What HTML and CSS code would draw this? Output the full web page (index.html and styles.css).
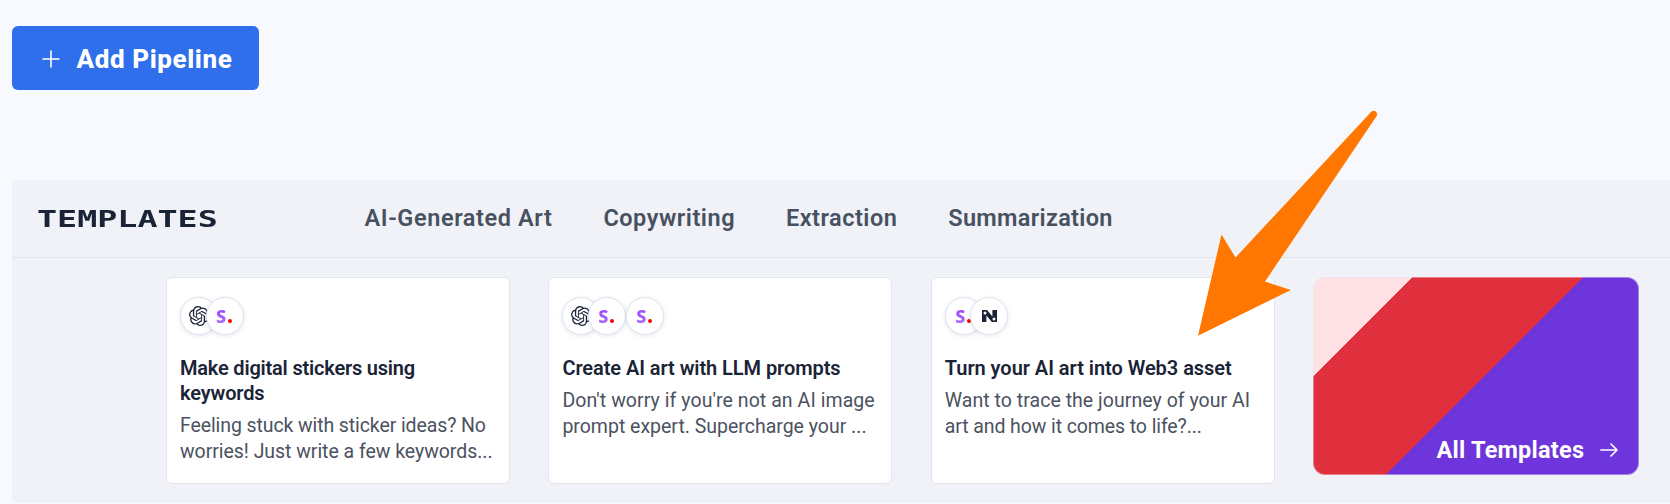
FILE: index.html
```
<!DOCTYPE html>
<html lang="en">
<head>
<meta charset="utf-8">
<title>Pipelines</title>
<link rel="stylesheet" href="styles.css">
</head>
<body>
<svg class="defs" width="0" height="0" aria-hidden="true">
  <symbol id="openai" viewBox="0 0 24 24"><path d="M22.2819 9.8211a5.9847 5.9847 0 0 0-.5157-4.9108 6.0462 6.0462 0 0 0-6.5098-2.9A6.0651 6.0651 0 0 0 4.9807 4.1818a5.9847 5.9847 0 0 0-3.9977 2.9 6.0462 6.0462 0 0 0 .7427 7.0966 5.98 5.98 0 0 0 .511 4.9107 6.051 6.051 0 0 0 6.5146 2.9001A5.9847 5.9847 0 0 0 13.2599 24a6.0557 6.0557 0 0 0 5.7718-4.2058 5.9894 5.9894 0 0 0 3.9977-2.9001 6.0557 6.0557 0 0 0-.7475-7.0729zm-9.022 12.6081a4.4755 4.4755 0 0 1-2.8764-1.0408l.1419-.0804 4.7783-2.7582a.7948.7948 0 0 0 .3927-.6813v-6.7369l2.02 1.1686a.071.071 0 0 1 .038.052v5.5826a4.504 4.504 0 0 1-4.4945 4.4944zm-9.6607-4.1254a4.4708 4.4708 0 0 1-.5346-3.0137l.142.0852 4.783 2.7582a.7712.7712 0 0 0 .7806 0l5.8428-3.3685v2.3324a.0804.0804 0 0 1-.0332.0615L9.74 19.9502a4.4992 4.4992 0 0 1-6.1408-1.6464zM2.3408 7.8956a4.485 4.485 0 0 1 2.3655-1.9728V11.6a.7664.7664 0 0 0 .3879.6765l5.8144 3.3543-2.0201 1.1685a.0757.0757 0 0 1-.071 0l-4.8303-2.7865A4.504 4.504 0 0 1 2.3408 7.872zm16.5963 3.8558L13.1038 8.364 15.1192 7.2a.0757.0757 0 0 1 .071 0l4.8303 2.7913a4.4944 4.4944 0 0 1-.6765 8.1042v-5.6772a.79.79 0 0 0-.407-.667zm2.0107-3.0231l-.142-.0852-4.7735-2.7818a.7759.7759 0 0 0-.7854 0L9.409 9.2297V6.8974a.0662.0662 0 0 1 .0284-.0615l4.8303-2.7866a4.4992 4.4992 0 0 1 6.6802 4.66zM8.3065 12.863l-2.02-1.1638a.0804.0804 0 0 1-.038-.0567V6.0742a4.4992 4.4992 0 0 1 7.3757-3.4537l-.142.0805L8.704 5.459a.7948.7948 0 0 0-.3927.6813zm1.0976-2.3654l2.602-1.4998 2.6069 1.4998v2.9994l-2.5974 1.4997-2.6067-1.4997Z"/></symbol>
</svg>

<button class="add-btn">
  <svg class="plus" viewBox="0 0 18 18"><path d="M9 1v16M1 9h16"/></svg>
  <span>Add Pipeline</span>
</button>

<section class="panel">
  <header class="panel-head">
    <h2 class="panel-title">TEMPLATES</h2>
    <nav class="tabs">
      <a class="tab-art">AI-Generated Art</a>
      <a class="tab-copy">Copywriting</a>
      <a class="tab-extract">Extraction</a>
      <a class="tab-sum">Summarization</a>
    </nav>
  </header>
  <div class="cards">
    <article class="card">
      <div class="badges">
        <span class="badge"><svg class="openai"><use href="#openai"/></svg></span>
        <span class="badge overlap"><b class="s">S</b><i class="dot"></i></span>
      </div>
      <h3><span class="t1">Make digital stickers using</span><br><span class="t2">keywords</span></h3>
      <p><span class="d1">Feeling stuck with sticker ideas? No</span><br><span class="d2">worries! Just write a few keywords...</span></p>
    </article>
    <article class="card">
      <div class="badges">
        <span class="badge"><svg class="openai"><use href="#openai"/></svg></span>
        <span class="badge overlap"><b class="s">S</b><i class="dot"></i></span>
        <span class="badge"><b class="s">S</b><i class="dot"></i></span>
      </div>
      <h3><span class="t3">Create AI art with LLM prompts</span></h3>
      <p><span class="d3">Don't worry if you're not an AI image</span><br><span class="d4">prompt expert. Supercharge your ...</span></p>
    </article>
    <article class="card">
      <div class="badges">
        <span class="badge"><b class="s">S</b><i class="dot"></i></span>
        <span class="badge overlap"><svg class="numbers" viewBox="0 0 15 12"><path d="M0 0h5l5.400 6.600V0H15v12H9.800L4.400 5.400V12H0z"/><circle cx="3" cy="2.900" r="1.500"/><circle cx="12" cy="9.100" r="1.500"/></svg></span>
      </div>
      <h3><span class="t4">Turn your AI art into Web3 asset</span></h3>
      <p><span class="d5">Want to trace the journey of your AI</span><br><span class="d6">art and how it comes to life?...</span></p>
    </article>
    <a class="all">
      <span>All Templates</span>
      <svg class="go" viewBox="0 0 18 14"><path d="M1 7h16M11 1l6 6-6 6"/></svg>
    </a>
  </div>
</section>

<svg class="pointer" viewBox="0 0 184 230"><path d="M0 225.700 23.500 124.500 37.500 147.500 173.500 1.500A3.600 3.600 0 0 1 179 5.500L67 171.500 93 180Z"/></svg>
</body>
</html>
```
FILE: styles.css
```
* { box-sizing: border-box; }
body {
  margin: 0;
  height: 504px;
  padding: 26px 0 0 12px;
  background: #f8f9fe;
  font-family: Roboto, "Liberation Sans", sans-serif;
  overflow: hidden;
  position: relative;
}
.defs { position: absolute; }
h2, h3, p { margin: 0; }
span, a { white-space: nowrap; }

.add-btn {
  display: flex;
  align-items: center;
  gap: 17px;
  width: 247px;
  height: 64px;
  padding: 1px 0 0 29.500px;
  border: 0;
  border-radius: 6px;
  background: #2f6feb;
  color: #fff;
  font: 800 26px Roboto, sans-serif;
  letter-spacing: .6px;
}
.plus { width: 18px; height: 18px; fill: none; stroke: #fff; stroke-width: 1.600; stroke-linecap: round; }

.panel {
  margin-top: 90px;
  height: 323px;
  background: #f1f2f8;
  border-radius: 6px 0 0 6px;
}
.panel-head {
  display: flex;
  align-items: center;
  height: 78px;
  padding-left: 25px;
  border-bottom: 1px solid #e0e4ed;
}
.panel-title {
  width: 327.500px;
  color: #1b2336;
  font: 700 23px/30px "DejaVu Sans Mono", monospace;
  transform: scaleX(1.45);
  transform-origin: left;
}
.tabs {
  display: flex;
  gap: 50.900px;
  padding-bottom: 1px;
  color: #475160;
  font-size: 23.500px;
  font-weight: 600;
}
.tab-art { letter-spacing: .6px; }
.tab-copy { letter-spacing: .53px; }
.tab-extract { letter-spacing: .5px; }
.tab-sum { letter-spacing: .32px; }

.cards {
  display: flex;
  align-items: flex-start;
  gap: 38.400px;
  padding: 19px 0 0 154px;
}
.card {
  width: 344px;
  height: 207px;
  padding: 19px 0 0 13px;
  background: #fff;
  border: 1px solid #e0e5f0;
  border-radius: 6px;
}
.badges { display: flex; }
.badge {
  position: relative;
  display: flex;
  align-items: center;
  justify-content: center;
  width: 38px;
  height: 38px;
  border: 1px solid #e0e4f0;
  border-radius: 50%;
  background: #fff;
  box-shadow: 0 1px 4px rgba(30, 40, 80, .12);
}
.overlap { margin-left: -12.500px; }
.openai { width: 20px; height: 20px; fill: #1b2336; }
.s {
  font: 800 18px/20px "Noto Sans", sans-serif;
  background: linear-gradient(#a03cff, #a874ff);
  background-clip: text;
  color: transparent;
}
.dot { width: 4px; height: 4px; margin: 9px 1px 0 2px; border-radius: 50%; background: #f00; }
.numbers { width: 15px; height: 12px; fill: #1b2336; }
.numbers circle { fill: #fff; }

.card h3 {
  margin-top: 21px;
  color: #1b2336;
  font-size: 20px;
  line-height: 25px;
  font-weight: 600;
}
.card p {
  margin-top: 7px;
  color: #4b5261;
  font-size: 19.500px;
  line-height: 25.500px;
}
.t1 { letter-spacing: -.2px; }
.t2 { letter-spacing: -.13px; }
.t3 { letter-spacing: -.07px; }
.t4 { letter-spacing: -.04px; }
.d1 { letter-spacing: -.1px; }
.d2 { letter-spacing: -.04px; }
.d3 { letter-spacing: .07px; }
.d4 { letter-spacing: -.01px; }
.d5 { letter-spacing: .04px; }
.d6 { letter-spacing: -.1px; }

.all {
  display: flex;
  align-items: flex-end;
  justify-content: flex-end;
  gap: 16px;
  width: 326px;
  height: 198px;
  padding: 0 20px 10px 0;
  border: 1px solid rgba(224, 229, 240, .45);
  border-radius: 12px;
  background: linear-gradient(135deg, #fee1e3 70.200px, #e02f3d 70.800px 191px, #6e35dd 191.600px) border-box;
  color: #fff;
  font-size: 23.500px;
  font-weight: 700;
  letter-spacing: .22px;
}
.go { width: 18px; height: 14px; margin-bottom: 7px; fill: none; stroke: #fff; stroke-width: 1.700; stroke-linecap: round; stroke-linejoin: round; }

/* annotation arrow drawn over the cards */
.pointer {
  position: absolute;
  left: 1198px;
  top: 110px;
  width: 184px;
  height: 230px;
  fill: #ff7700;
}
```
